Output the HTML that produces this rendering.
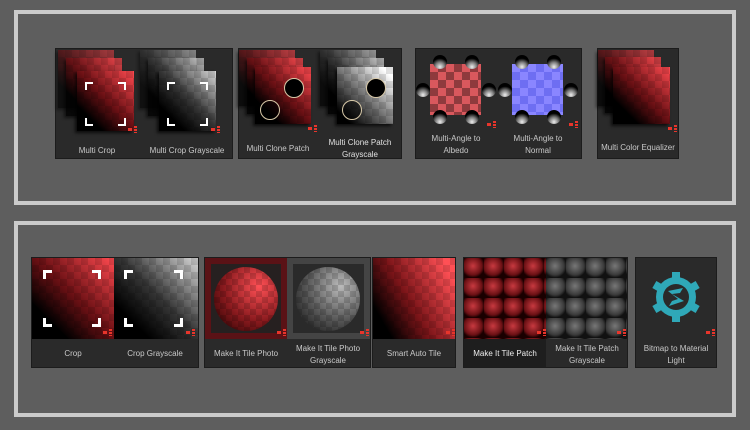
<!DOCTYPE html><html><head><style>
*{margin:0;padding:0;box-sizing:border-box}
body{width:750px;height:430px;background:#5e5e5e;position:relative;overflow:hidden;font-family:"Liberation Sans",sans-serif}
.panel{position:absolute;border:4px solid #cbcbcb}
.g{position:absolute;background:#2a2a2a;border:1px solid #1c1c1c}
.a{position:absolute}
.lbl{position:absolute;color:#c9c9c9;font-size:8px;text-align:center;line-height:12px;width:82px}
.red{background-image:repeating-conic-gradient(rgba(0,0,0,.12) 0 25%,transparent 0 50%),linear-gradient(45deg,#000 22%,#6a1014 52%,#ff4a50 100%);background-size:14px 14px,100% 100%}
.gray{background-image:repeating-conic-gradient(rgba(0,0,0,.12) 0 25%,transparent 0 50%),linear-gradient(45deg,#000 22%,#333 52%,#d8d8d8 100%);background-size:14px 14px,100% 100%}
.sh{box-shadow:-2px 2px 3px rgba(0,0,0,.7)}
.ic{position:absolute;width:9px;height:7px}
.ic:before{content:"";position:absolute;left:0;top:2px;width:4px;height:3px;background:#e8352b}
.ic:after{content:"";position:absolute;right:0;top:0;width:3px;height:7px;background:repeating-linear-gradient(#e8352b 0 2px,transparent 2px 3px)}
.br{position:absolute;width:8px;height:8px;border-color:#fff;border-style:solid}
.ball{position:absolute;width:14px;height:14px;border-radius:50%;background:radial-gradient(circle at 50% 85%,#eee,#777 35%,#000 62%)}
.cir{position:absolute;border:1.5px solid #d8c9a8;border-radius:50%}
</style></head><body>
<div class="panel" style="left:14px;top:10px;width:722px;height:195px"></div>
<div class="panel" style="left:14px;top:221px;width:722px;height:196px"></div>

<div class="g" style="left:55px;top:48px;width:178px;height:111px"></div>
<div class="a red sh" style="left:58px;top:50px;width:56px;height:58px;opacity:.6"></div>
<div class="a red sh" style="left:66px;top:58px;width:56px;height:58px;opacity:.8"></div>
<div class="a red sh" style="left:77px;top:71px;width:57px;height:60px"></div>
<div class="br" style="left:85px;top:82px;border-width:2px 0 0 2px"></div>
<div class="br" style="left:118px;top:82px;border-width:2px 2px 0 0"></div>
<div class="br" style="left:85px;top:118px;border-width:0 0 2px 2px"></div>
<div class="br" style="left:118px;top:118px;border-width:0 2px 2px 0"></div>
<div class="ic" style="left:128px;top:126px"></div>
<div class="lbl" style="left:56px;top:145px">Multi Crop</div>
<div class="a gray sh" style="left:140px;top:50px;width:56px;height:58px;opacity:.6"></div>
<div class="a gray sh" style="left:148px;top:58px;width:56px;height:58px;opacity:.8"></div>
<div class="a gray sh" style="left:159px;top:71px;width:57px;height:60px"></div>
<div class="br" style="left:167px;top:82px;border-width:2px 0 0 2px"></div>
<div class="br" style="left:200px;top:82px;border-width:2px 2px 0 0"></div>
<div class="br" style="left:167px;top:118px;border-width:0 0 2px 2px"></div>
<div class="br" style="left:200px;top:118px;border-width:0 2px 2px 0"></div>
<div class="ic" style="left:211px;top:126px"></div>
<div class="lbl" style="left:141px;top:145px;width:92px">Multi Crop Grayscale</div>

<div class="g" style="left:238px;top:48px;width:164px;height:111px"></div>
<div class="a red sh" style="left:239px;top:50px;width:56px;height:56px;opacity:.7"></div>
<div class="a red sh" style="left:247px;top:58px;width:56px;height:56px;opacity:.85"></div>
<div class="a red sh" style="left:255px;top:67px;width:56px;height:57px"></div>
<div class="cir" style="left:284px;top:78px;width:20px;height:20px;background:#000"></div>
<div class="cir" style="left:260px;top:100px;width:20px;height:20px;background:rgba(0,0,0,.5)"></div>
<div class="ic" style="left:308px;top:125px"></div>
<div class="lbl" style="left:237px;top:143px">Multi Clone Patch</div>
<div class="a gray sh" style="left:320px;top:50px;width:56px;height:56px;opacity:.7"></div>
<div class="a gray sh" style="left:328px;top:58px;width:56px;height:56px;opacity:.85"></div>
<div class="a gray sh" style="left:337px;top:67px;width:56px;height:57px;background-image:repeating-conic-gradient(rgba(0,0,0,.12) 0 25%,transparent 0 50%),linear-gradient(45deg,#000 12%,#666 45%,#fff 90%)"></div>
<div class="cir" style="left:366px;top:78px;width:20px;height:20px;background:#000"></div>
<div class="cir" style="left:342px;top:100px;width:20px;height:20px;background:rgba(0,0,0,.5)"></div>
<div class="lbl" style="left:319px;top:137px;color:#e0e0e0">Multi Clone Patch<br>Grayscale</div>

<div class="g" style="left:415px;top:48px;width:167px;height:111px"></div>
<div class="a" style="left:430px;top:64px;width:51px;height:51px;background:repeating-conic-gradient(#8f3a3d 0 25%,#d9585d 0 50%);background-size:16px 16px"></div>
<div class="ball" style="left:433px;top:55px"></div><div class="ball" style="left:465px;top:55px"></div>
<div class="ball" style="left:416px;top:83px"></div><div class="ball" style="left:482px;top:83px"></div>
<div class="ball" style="left:433px;top:110px"></div><div class="ball" style="left:465px;top:110px"></div>
<div class="ic" style="left:487px;top:121px"></div>
<div class="lbl" style="left:415px;top:133px">Multi-Angle to<br>Albedo</div>
<div class="a" style="left:512px;top:64px;width:51px;height:51px;background:repeating-conic-gradient(#6e6ef2 0 25%,#8a86ff 0 50%);background-size:16px 16px"></div>
<div class="ball" style="left:515px;top:55px"></div><div class="ball" style="left:547px;top:55px"></div>
<div class="ball" style="left:498px;top:83px"></div><div class="ball" style="left:564px;top:83px"></div>
<div class="ball" style="left:515px;top:110px"></div><div class="ball" style="left:547px;top:110px"></div>
<div class="ic" style="left:569px;top:121px"></div>
<div class="lbl" style="left:497px;top:133px">Multi-Angle to<br>Normal</div>

<div class="g" style="left:597px;top:48px;width:82px;height:111px"></div>
<div class="a red sh" style="left:598px;top:50px;width:56px;height:56px;opacity:.7"></div>
<div class="a red sh" style="left:605px;top:57px;width:56px;height:56px;opacity:.85"></div>
<div class="a red sh" style="left:613px;top:67px;width:57px;height:57px"></div>
<div class="ic" style="left:668px;top:125px"></div>
<div class="lbl" style="left:597px;top:142px">Multi Color Equalizer</div>

<div class="g" style="left:31px;top:257px;width:168px;height:111px"></div>
<div class="a red" style="left:32px;top:258px;width:82px;height:81px"></div>
<div class="br" style="left:43px;top:270px;border-width:3px 0 0 3px;width:9px;height:9px"></div>
<div class="br" style="left:92px;top:270px;border-width:3px 3px 0 0;width:9px;height:9px"></div>
<div class="br" style="left:43px;top:318px;border-width:0 0 3px 3px;width:9px;height:9px"></div>
<div class="br" style="left:92px;top:318px;border-width:0 3px 3px 0;width:9px;height:9px"></div>
<div class="ic" style="left:103px;top:329px"></div>
<div class="lbl" style="left:32px;top:348px">Crop</div>
<div class="a gray" style="left:114px;top:258px;width:84px;height:81px"></div>
<div class="br" style="left:124px;top:270px;border-width:3px 0 0 3px;width:9px;height:9px"></div>
<div class="br" style="left:174px;top:270px;border-width:3px 3px 0 0;width:9px;height:9px"></div>
<div class="br" style="left:124px;top:318px;border-width:0 0 3px 3px;width:9px;height:9px"></div>
<div class="br" style="left:174px;top:318px;border-width:0 3px 3px 0;width:9px;height:9px"></div>
<div class="ic" style="left:186px;top:329px"></div>
<div class="lbl" style="left:114px;top:348px">Crop Grayscale</div>

<div class="g" style="left:204px;top:257px;width:167px;height:111px"></div>
<div class="a" style="left:205px;top:258px;width:82px;height:81px;background:#262020;box-shadow:inset 0 0 0 6px #5a1216"></div>
<div class="a" style="left:214px;top:267px;width:64px;height:64px;border-radius:50%;background-image:repeating-conic-gradient(rgba(0,0,0,.15) 0 25%,transparent 0 50%),radial-gradient(circle at 70% 30%,#ff5055,#8a1a1e 55%,#200 100%);background-size:12px 12px,100% 100%"></div>
<div class="ic" style="left:277px;top:329px"></div>
<div class="lbl" style="left:205px;top:348px">Make It Tile Photo</div>
<div class="a" style="left:287px;top:258px;width:83px;height:81px;background:#2a2a2a;box-shadow:inset 0 0 0 6px #444"></div>
<div class="a" style="left:296px;top:267px;width:64px;height:64px;border-radius:50%;background-image:repeating-conic-gradient(rgba(0,0,0,.15) 0 25%,transparent 0 50%),radial-gradient(circle at 70% 30%,#bbb,#555 55%,#111 100%);background-size:12px 12px,100% 100%"></div>
<div class="ic" style="left:360px;top:329px"></div>
<div class="lbl" style="left:287px;top:343px">Make It Tile Photo<br>Grayscale</div>

<div class="g" style="left:372px;top:257px;width:84px;height:111px"></div>
<div class="a" style="left:373px;top:258px;width:82px;height:81px;background-image:repeating-conic-gradient(rgba(0,0,0,.12) 0 25%,transparent 0 50%),linear-gradient(60deg,#000 15%,#7a1418 45%,#ff5055 90%);background-size:14px 14px,100% 100%"></div>
<div class="ic" style="left:446px;top:329px"></div>
<div class="lbl" style="left:373px;top:348px">Smart Auto Tile</div>

<div class="g" style="left:463px;top:257px;width:165px;height:111px"></div>
<div class="a" style="left:464px;top:258px;width:82px;height:81px;background:radial-gradient(circle at 45% 40%,#c83a40,#6a1014 55%,#1a0000 72%);background-size:20px 20px"></div>
<div class="a" style="left:464px;top:339px;width:82px;height:28px;background:#1e1e1e"></div>
<div class="ic" style="left:537px;top:329px"></div>
<div class="lbl" style="left:464px;top:348px;color:#eee">Make It Tile Patch</div>
<div class="a" style="left:546px;top:258px;width:81px;height:81px;background:radial-gradient(circle at 45% 40%,#777,#3a3a3a 55%,#111 72%);background-size:20px 20px"></div>
<div class="ic" style="left:617px;top:329px"></div>
<div class="lbl" style="left:546px;top:343px">Make It Tile Patch<br>Grayscale</div>

<div class="g" style="left:635px;top:257px;width:82px;height:111px"></div>
<svg class="a" style="left:650px;top:271px" width="52" height="52" viewBox="0 0 52 52">
<g fill="#2fa8b8">
<circle cx="26" cy="26" r="20"/>
<g id="t"><rect x="22" y="1" width="8" height="8"/></g>
<use href="#t" transform="rotate(60 26 26)"/><use href="#t" transform="rotate(120 26 26)"/><use href="#t" transform="rotate(180 26 26)"/><use href="#t" transform="rotate(240 26 26)"/><use href="#t" transform="rotate(300 26 26)"/>
</g>
<circle cx="26" cy="26" r="13" fill="#2a2a2a"/>
<path d="M18 20 L33 17 L30 22 L22 23 L34 30 L19 35 L22 30 L28 28 Z" fill="#2fa8b8"/>
</svg>
<div class="ic" style="left:706px;top:329px"></div>
<div class="lbl" style="left:635px;top:343px">Bitmap to Material<br>Light</div>
</body></html>
